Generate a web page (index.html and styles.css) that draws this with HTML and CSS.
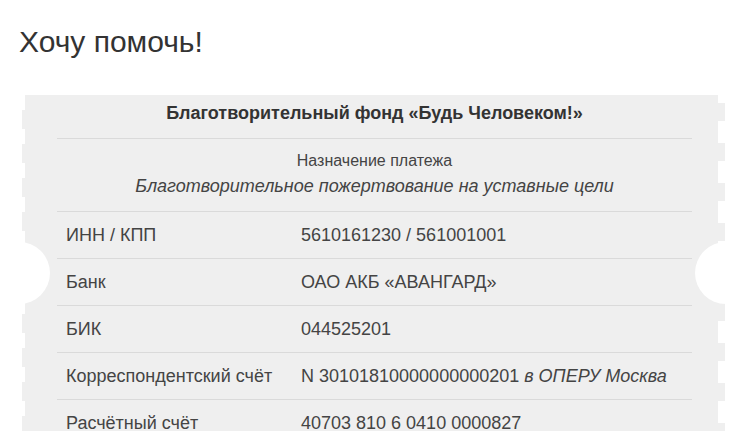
FILE: index.html
```html
<!DOCTYPE html>
<html lang="ru">
<head>
    <meta charset="UTF-8">
    <meta name="viewport" content="width=device-width, initial-scale=1.0">
    <title>Хочу помочь!</title>
    <link rel="stylesheet" href="styles.css">
</head>
<body>
    <h1 class="title">Хочу помочь!</h1>

    <div class="ticket">
        <div class="ticket-inner">
            <div class="ticket-head">Благотворительный фонд «Будь Человеком!»</div>

            <div class="purpose">
                <div class="purpose-label">Назначение платежа</div>
                <div class="purpose-text">Благотворительное пожертвование на уставные цели</div>
            </div>

            <div class="req-row">
                <div class="req-label">ИНН / КПП</div>
                <div class="req-value">5610161230 / 561001001</div>
            </div>
            <div class="req-row">
                <div class="req-label">Банк</div>
                <div class="req-value">ОАО АКБ «АВАНГАРД»</div>
            </div>
            <div class="req-row">
                <div class="req-label">БИК</div>
                <div class="req-value">044525201</div>
            </div>
            <div class="req-row">
                <div class="req-label">Корреспондентский счёт</div>
                <div class="req-value">N 30101810000000000201 <em>в ОПЕРУ Москва</em></div>
            </div>
            <div class="req-row">
                <div class="req-label">Расчётный счёт</div>
                <div class="req-value">40703 810 6 0410 0000827</div>
            </div>
        </div>
    </div>
</body>
</html>
```

FILE: styles.css
```css
* { margin: 0; padding: 0; box-sizing: border-box; }
body { font-family: "Liberation Sans", Arial, sans-serif; background: #fff; color: #444; overflow: hidden; }

.title { font-size: 30px; font-weight: normal; color: #333; line-height: 34px; padding: 25px 0 0 19px; }

/* ticket with perforated edges */
.ticket {
    position: relative;
    margin: 36px 15px 0 22px;
    padding: 0 7px 0 3px;
    background:
        linear-gradient(#efefef, #efefef) 3px 0 / calc(100% - 10px) 100% no-repeat,
        repeating-linear-gradient(to bottom, transparent 0 15px, #efefef 15px 34px) left top / 3px 100% no-repeat,
        repeating-linear-gradient(to bottom, transparent 0 8px, #efefef 8px 26px, transparent 26px 40px) right top / 7px 100% no-repeat;
}
.ticket::before,
.ticket::after {
    content: "";
    position: absolute;
    top: 147px;
    width: 62px;
    height: 62px;
    border-radius: 50%;
    background: #fff;
}
.ticket::before { left: -34px; }
.ticket::after { right: -32px; }

.ticket-inner { padding: 0 26px 0 32px; }

.ticket-head { font-weight: bold; font-size: 18px; color: #333; text-align: center; height: 44px; line-height: 37px; border-bottom: 1px solid #dadada; }

.purpose { text-align: center; height: 73px; padding-top: 12px; border-bottom: 1px solid #dadada; }
.purpose-label { font-size: 16px; line-height: 20px; color: #444; }
.purpose-text { font-size: 18px; font-style: italic; line-height: 24px; color: #444; margin-top: 3px; }

.req-row { display: grid; grid-template-columns: 235px 1fr; align-items: center; height: 47px; padding: 0 9px; border-bottom: 1px solid #dadada; font-size: 18px; }
.req-label { color: #444; }
.req-value { color: #444; }
```
